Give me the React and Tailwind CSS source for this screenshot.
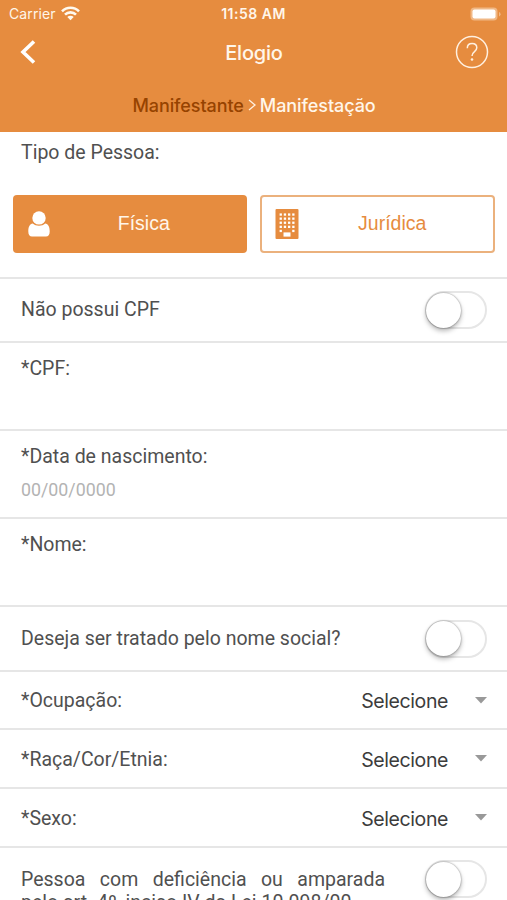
import React from 'react';

function WifiIcon() {
  return (
    <svg width="19" height="15" viewBox="0 0 19 15" fill="none" stroke="#fffaf0" strokeWidth="2.6">
      <path d="M1 5.3a12 12 0 0 1 17 0" />
      <path d="M4 8.6a7.8 7.8 0 0 1 11 0" />
      <path d="M9.5 14.2 6.3 11a4.5 4.5 0 0 1 6.4 0Z" fill="#fffaf0" stroke="none" />
    </svg>
  );
}

function BatteryIcon() {
  return (
    <svg width="31" height="14" viewBox="0 0 31 14">
      <rect x="0.5" y="0.5" width="27" height="13" rx="4" fill="#f0b886" />
      <rect x="2.5" y="2.5" width="23" height="9" rx="2" fill="#fff" />
      <path d="M29 5v4.4q1.6-.6 1.6-2.2T29 5Z" fill="#f0b886" />
    </svg>
  );
}

function PersonIcon() {
  return (
    <svg width="22" height="26" viewBox="0 0 22 26" fill="#fff">
      <path d="M4.8 12.6C1.7 12.9.3 16 .3 20.5.3 24 1.7 25.6 4 25.6h14c2.3 0 3.7-1.6 3.7-5.1 0-4.5-1.4-7.6-4.5-7.9-1.7 1.4-3.7 2.2-6.2 2.2s-4.5-.8-6.2-2.2Z" />
      <circle cx="11" cy="6.9" r="6.7" />
    </svg>
  );
}

function BuildingIcon() {
  const cols = [4.6, 8.8, 13, 17.2];
  const rows = [4.4, 8.5, 12.6, 16.7, 20.8];
  return (
    <svg width="24" height="30" viewBox="0 0 24 30">
      <rect x="0.5" y="0" width="23" height="30" rx="1" fill="#e68c3f" />
      {rows.map((y, r) =>
        cols.map((x, c) =>
          // a porta ocupa o centro da última fileira
          r === 4 && (c === 1 || c === 2) ? null : (
            <rect key={`${r}-${c}`} x={x} y={y} width="2.3" height="2.3" fill="#fff" />
          )
        )
      )}
      <rect x="8.5" y="23.4" width="7" height="4.2" fill="#fff" />
    </svg>
  );
}

function Toggle() {
  return (
    <span className="flex h-[38px] w-[62px] shrink-0 items-center rounded-full border-2 border-[#e6e6e6] bg-white">
      <span className="-ml-px h-[35px] w-[35px] rounded-full bg-white shadow-[0_3px_5px_rgba(0,0,0,0.28),0_0_2px_rgba(0,0,0,0.45)]" />
    </span>
  );
}

function ToggleRow({ label, height }) {
  return (
    <div className={`flex shrink-0 items-center justify-between border-b-2 border-[#e6e6e6] pr-5 pl-[21px] ${height}`}>
      <span>{label}</span>
      <Toggle />
    </div>
  );
}

function InputRow({ label, placeholder }) {
  return (
    <div className="h-[88px] shrink-0 border-b-2 border-[#e6e6e6] px-[21px] pt-[14px]">
      <div className="leading-6">{label}</div>
      {placeholder && <div className="mt-[9px] text-[17.8px] leading-6 text-[#b3b3b3]">{placeholder}</div>}
    </div>
  );
}

function SelectRow({ label, height }) {
  return (
    <div className={`flex shrink-0 items-center border-b-2 border-[#e6e6e6] pr-5 pl-[21px] ${height}`}>
      <span className="flex-1 pt-0.5">{label}</span>
      <span className="pt-1 font-[Inter,sans-serif] text-[19.5px] tracking-[-0.4px] text-[#3c3c3c]">Selecione</span>
      <svg className="ml-[27px]" width="12" height="7" viewBox="0 0 12 7">
        <path d="M0 0h12L6 6.5Z" fill="#999" />
      </svg>
    </div>
  );
}

export default function App() {
  return (
    <div className="flex h-[900px] w-[507px] flex-col overflow-hidden bg-white font-[Roboto,sans-serif] text-[19.5px] text-[#505050]">
      <header className="h-[132px] shrink-0 bg-[#e68c3f] font-[Inter,sans-serif] text-[#fff6ea]">
        {/* Barra de status */}
        <div className="grid h-7 grid-cols-3 items-center pr-[6px] pl-[9px]">
          <div className="flex items-center gap-[5px] pb-0.5">
            <span className="text-[14px] tracking-[0.1px]">Carrier</span>
            <WifiIcon />
          </div>
          <span className="pr-[3px] pb-px text-center text-[14px] font-semibold tracking-[0.5px] whitespace-nowrap">11:58 AM</span>
          <span className="flex justify-end pb-px"><BatteryIcon /></span>
        </div>

        {/* Título */}
        <div className="grid h-12 grid-cols-3 items-center pr-[18px] pl-5">
          <svg width="17" height="24" viewBox="0 0 17 24" fill="none" stroke="#fff" strokeWidth="3.6">
            <path d="M14 1.5 3 12l11 10.5" />
          </svg>
          <h1 className="pt-px pr-px text-center text-[20px] font-medium tracking-[-0.2px]">Elogio</h1>
          <span className="flex justify-end">
            <svg width="34" height="34" viewBox="0 0 34 34" fill="none" stroke="#fff0e0" strokeWidth="1.5">
              <circle cx="17" cy="17" r="15.5" />
              <path d="M12.3 13.2c0-3 2-4.7 4.8-4.7s4.7 1.7 4.7 4.3c0 4-4.8 3.7-4.8 8.2" />
              <circle cx="17" cy="24.5" r="1.3" fill="#fff0e0" stroke="none" />
            </svg>
          </span>
        </div>

        {/* Etapas */}
        <div className="flex h-[58px] items-center justify-center pl-px text-[18px] font-medium tracking-[-0.08px]">
          <span className="text-[#964300]">Manifestante</span>
          <svg className="mx-1" width="8" height="12" viewBox="0 0 8 12" fill="none" stroke="#fff0e0" strokeWidth="1.3">
            <path d="M1 1l6 5-6 5" />
          </svg>
          <span>Manifestação</span>
        </div>
      </header>

      {/* Tipo de pessoa */}
      <section className="h-[147px] shrink-0 border-b-2 border-[#e6e6e6] pt-[9px]">
        <div className="pl-[21px] leading-6">Tipo de Pessoa:</div>
        <div className="mt-[30px] flex gap-[13px] pr-3 pl-[13px] font-['Liberation_Sans',sans-serif] text-[19.5px]">
          <button className="flex h-[58px] flex-1 items-center rounded bg-[#e68c3f] pl-[15px] text-[#fff6ea]">
            <PersonIcon />
            <span className="flex-1 pr-[9px] text-center">Física</span>
          </button>
          <button className="flex h-[58px] flex-1 items-center rounded border-2 border-[#ebb17d] pl-[13px] text-[#e68c3f]">
            <BuildingIcon />
            <span className="flex-1 pr-[7px] text-center">Jurídica</span>
          </button>
        </div>
      </section>

      <ToggleRow label="Não possui CPF" height="h-[64px]" />
      <InputRow label="*CPF:" />
      <InputRow label="*Data de nascimento:" placeholder="00/00/0000" />
      <InputRow label="*Nome:" />
      <ToggleRow label="Deseja ser tratado pelo nome social?" height="h-[65px]" />
      <SelectRow label="*Ocupação:" height="h-[58px]" />
      <SelectRow label="*Raça/Cor/Etnia:" height="h-[59px]" />
      <SelectRow label="*Sexo:" height="h-[59px]" />

      <div className="flex h-[52px] shrink-0 items-start justify-between overflow-hidden pt-3 pr-5 pl-[21px]">
        <p className="mt-2 w-[364px] text-justify leading-[23px]">
          Pessoa com deficiência ou amparada pelo art. 4º, inciso IV da Lei 10.098/00
        </p>
        <Toggle />
      </div>
    </div>
  );
}
